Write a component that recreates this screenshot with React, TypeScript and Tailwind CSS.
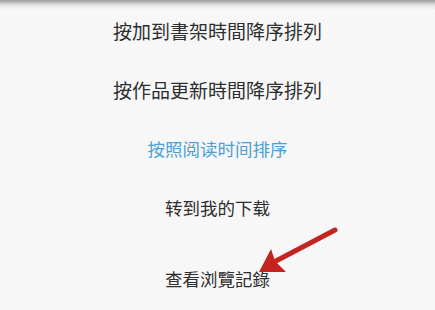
import React from "react";

const items = [
  { text: "按加到書架時間降序排列", size: "text-[19px]", color: "text-[#2e2e2e]", font: "'Noto Sans CJK TC', sans-serif" },
  { text: "按作品更新時間降序排列", size: "text-[19px]", color: "text-[#2e2e2e]", font: "'Noto Sans CJK TC', sans-serif" },
  { text: "按照阅读时间排序", size: "text-[17.5px]", color: "text-[#4b9fd6]", font: "'Noto Sans CJK SC', sans-serif" },
  { text: "转到我的下载", size: "text-[17.5px]", color: "text-[#2e2e2e]", font: "'Noto Sans CJK SC', sans-serif" },
];

export default function App() {
  return (
    <div className="relative w-[435px] h-[310px] overflow-hidden bg-[#f7f7f7]">
      <div className="absolute top-0 left-0 w-full h-[10px] bg-gradient-to-b from-[#9a9a9a] via-[#e4e4e4] to-[#f7f7f7]" />
      <div className="relative flex flex-col pt-[2px]">
        {items.map((it) => (
          <div
            key={it.text}
            className={`h-[59px] flex items-center justify-center ${it.size} ${it.color}`}
            style={{ fontFamily: it.font }}
          >
            {it.text}
          </div>
        ))}
        <div
          className="mt-[12px] h-[59px] flex items-center justify-center text-[17.5px] text-[#2e2e2e]"
          style={{ fontFamily: "'Noto Sans CJK TC', sans-serif" }}
        >
          查看浏覽記錄
        </div>
      </div>
      <svg className="absolute left-0 top-0" width="435" height="310" viewBox="0 0 435 310">
        <line x1="335" y1="230" x2="274" y2="262" stroke="#c42420" strokeWidth="5" strokeLinecap="round" />
        <polygon points="259,272 271,249 275,261 286,272" fill="#c42420" />
      </svg>
    </div>
  );
}
